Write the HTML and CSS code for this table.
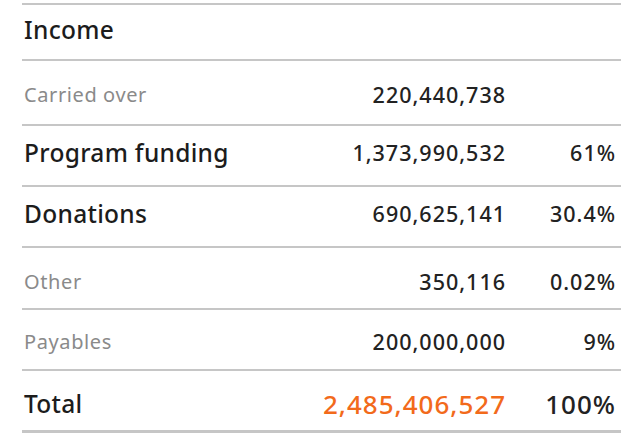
FILE: index.html
```html
<!DOCTYPE html>
<html>
<head>
<meta charset="utf-8">
<link rel="stylesheet" href="styles.css">
</head>
<body>
<div class="table">
  <div class="row row-head">
    <div class="label strong">Income</div>
    <div class="amount"></div>
    <div class="pct"></div>
  </div>
  <div class="row row-carried">
    <div class="label muted">Carried over</div>
    <div class="amount">220,440,738</div>
    <div class="pct"></div>
  </div>
  <div class="row row-main">
    <div class="label strong">Program funding</div>
    <div class="amount">1,373,990,532</div>
    <div class="pct">61%</div>
  </div>
  <div class="row row-main">
    <div class="label strong">Donations</div>
    <div class="amount">690,625,141</div>
    <div class="pct">30.4%</div>
  </div>
  <div class="row row-other">
    <div class="label muted">Other</div>
    <div class="amount">350,116</div>
    <div class="pct">0.02%</div>
  </div>
  <div class="row row-payables">
    <div class="label muted">Payables</div>
    <div class="amount">200,000,000</div>
    <div class="pct">9%</div>
  </div>
  <div class="row row-total">
    <div class="label strong">Total</div>
    <div class="amount total-amount">2,485,406,527</div>
    <div class="pct total-pct">100%</div>
  </div>
</div>
</body>
</html>
```

FILE: styles.css
```css
html, body {
  margin: 0;
  padding: 0;
  background: #ffffff;
}

body {
  padding-top: 3px;
  font-family: "Noto Sans", "Noto Sans CJK KR", sans-serif;
  color: #1e1e1e;
}

.table {
  margin-left: 22px;
  width: 599px;
  border-top: 2px solid #c6c6c6;
}

.row {
  display: grid;
  grid-template-columns: 1fr 200px 110px;
  align-items: center;
  border-bottom: 2px solid #c6c6c6;
  padding-right: 5px;
  padding-left: 2px;
}

.row-head {
  height: 48px;
  padding-bottom: 6px;
}

.row-carried {
  height: 59px;
  padding-top: 4px;
}

.row-main {
  height: 53px;
  padding-bottom: 6px;
}

.row-other {
  height: 54px;
  padding-top: 6px;
}

.row-payables {
  height: 55px;
  padding-top: 4px;
}

.row-total {
  border-bottom-width: 3px;
  height: 53px;
  padding-top: 6px;
}

.label {
  font-size: 20px;
  letter-spacing: 0.6px;
}

.label.strong {
  font-size: 24.5px;
  font-weight: 500;
  color: #1c1c1c;
  letter-spacing: 0.3px;
}

.label.muted {
  color: #8a8a8a;
}

.amount,
.pct {
  text-align: right;
  font-size: 21.5px;
  letter-spacing: 1px;
  color: #222222;
  font-weight: 500;
}

.total-amount {
  font-size: 26px;
  color: #f26a1b;
}

.total-pct {
  font-size: 26px;
}
```
